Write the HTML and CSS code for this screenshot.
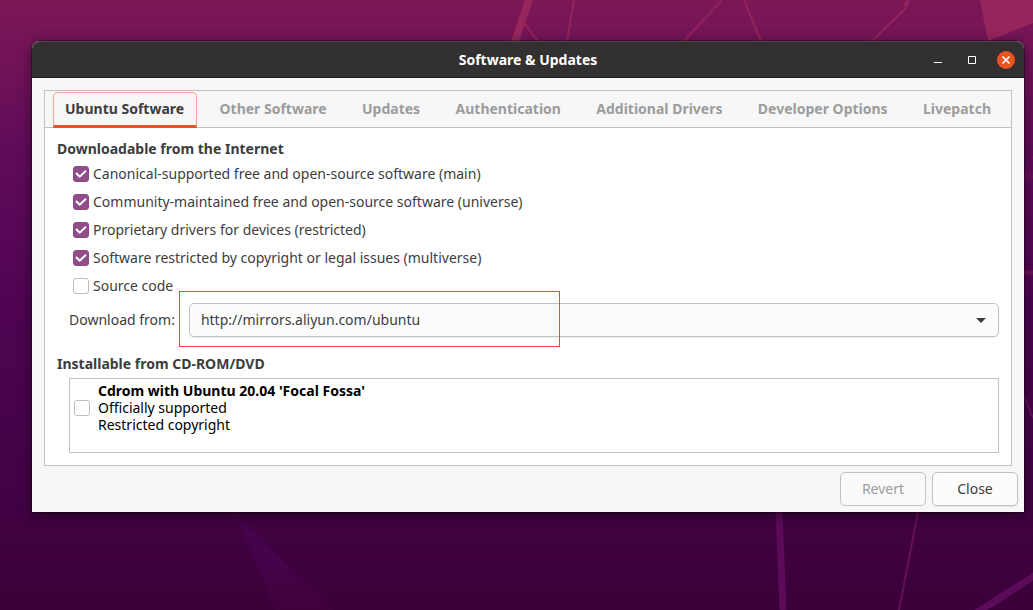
FILE: index.html
```html
<!DOCTYPE html>
<html lang="en">
<head>
<meta charset="utf-8">
<title>Software &amp; Updates</title>
<link rel="stylesheet" href="styles.css">
</head>
<body>
<svg class="wallpaper" viewBox="0 0 1033 610" preserveAspectRatio="none" aria-hidden="true">
  <defs>
    <linearGradient id="ray" x1="0" y1="0" x2="0" y2="1">
      <stop offset="0" stop-color="#4b0456" stop-opacity=".3"/>
      <stop offset=".4" stop-color="#4b0456" stop-opacity=".6"/>
      <stop offset="1" stop-color="#470442" stop-opacity=".4"/>
    </linearGradient>
  </defs>
  <g fill="#97265c">
    <path d="M980 0h53v23l-45 18z"/>
    <path d="M525 0h8l-14 41h-8z"/>
  </g>
  <g fill="none" stroke="#93235c" stroke-width="2">
    <path d="M523 22l15 19M574 0l-7 41M722 0l-38 41M744 0l17 41M907 0l-1 8-34 33"/>
    <path d="M908 0l-3 7" stroke-width="4"/>
  </g>
  <g fill="none" stroke="#680f59" stroke-width="2">
    <path d="M1033 156l-8 18"/>
    <path d="M1024 177l9-1" stroke-width="6"/>
    <path d="M1024 272l9 1" stroke-width="5"/>
    <path d="M1024 396l9 22M918 512l-19 98"/>
    <path d="M779 512l4 98" stroke-width="7" stroke="#5c0a5a"/>
    <path d="M1037 574l-62 40" stroke-width="7" stroke="#5c0a5a"/>
  </g>
  <path d="M234 512l100 98h-58z" fill="url(#ray)"/>
</svg>
<main class="window">
  <header class="titlebar">
    <h1 class="title">Software &amp; Updates</h1>
    <div class="controls">
      <button class="control" type="button" aria-label="Minimize"><svg width="18" height="18" viewBox="0 0 18 18"><path d="M5 11.5h8" stroke="#fff"/></svg></button>
      <button class="control" type="button" aria-label="Maximize"><svg width="18" height="18" viewBox="0 0 18 18"><path d="M5.500 5.500h7v7h-7z" fill="none" stroke="#fff"/></svg></button>
      <button class="control close" type="button" aria-label="Close window"><svg width="18" height="18" viewBox="0 0 18 18"><path d="M5.500 5.500l7 7m0-7l-7 7" stroke="#fff" stroke-width="1.500"/></svg></button>
    </div>
  </header>
  <div class="content">
    <section class="notebook">
      <div class="tabs" role="tablist">
        <button class="tab active" type="button" role="tab" aria-selected="true">Ubuntu Software</button>
        <button class="tab" type="button" role="tab">Other Software</button>
        <button class="tab" type="button" role="tab">Updates</button>
        <button class="tab" type="button" role="tab">Authentication</button>
        <button class="tab" type="button" role="tab">Additional Drivers</button>
        <button class="tab" type="button" role="tab">Developer Options</button>
        <button class="tab" type="button" role="tab">Livepatch</button>
      </div>
      <div class="panel" role="tabpanel">
        <h2 class="heading">Downloadable from the Internet</h2>
        <div class="options">
          <label class="option"><input class="check" type="checkbox" checked>Canonical-supported free and open-source software (main)</label>
          <label class="option"><input class="check" type="checkbox" checked>Community-maintained free and open-source software (universe)</label>
          <label class="option"><input class="check" type="checkbox" checked>Proprietary drivers for devices (restricted)</label>
          <label class="option"><input class="check" type="checkbox" checked>Software restricted by copyright or legal issues (multiverse)</label>
          <label class="option"><input class="check" type="checkbox">Source code</label>
        </div>
        <div class="download">
          <label class="download-label" for="server">Download from:</label>
          <div class="picker">
            <select class="select" id="server"><option>http://mirrors.aliyun.com/ubuntu</option></select>
            <svg class="arrow" width="10" height="5" viewBox="0 0 10 5"><path d="M0 0h10L5 5z" fill="#3d3d3d"/></svg>
            <div class="highlight"></div>
          </div>
        </div>
        <h2 class="heading">Installable from CD-ROM/DVD</h2>
        <div class="sources">
          <input class="check" type="checkbox" id="cdrom">
          <label class="source" for="cdrom"><b>Cdrom with Ubuntu 20.04 'Focal Fossa'</b><br>Officially supported<br>Restricted copyright</label>
        </div>
      </div>
    </section>
  </div>
  <footer class="actions">
    <button class="button" type="button" disabled>Revert</button>
    <button class="button" type="button">Close</button>
  </footer>
</main>
</body>
</html>
```
FILE: styles.css
```css
* { box-sizing: border-box; }
body {
  margin: 0;
  min-height: 100vh;
  padding: 41px 9px 98px 32px;
  background: linear-gradient(#7b1755, #741458 8%, #5f0b5a 26%, #4f0452 50%, #430346 78%, #3b0039);
  font: 14px/20px "Noto Sans", "Open Sans", sans-serif;
  color: #3d3d3d;
}
button, select, input { font: inherit; color: inherit; margin: 0; }
h1, h2 { margin: 0; font-size: 14px; font-weight: 700; }
.wallpaper { position: absolute; inset: 0; width: 100%; height: 100%; z-index: -1; }
.window {
  background: #f7f7f7;
  border-radius: 8px 8px 0 0;
  box-shadow: 0 0 0 1px rgba(0,0,0,.3), 0 3px 14px rgba(0,0,0,.5);
}
.titlebar {
  display: grid;
  grid-template-columns: 1fr auto 1fr;
  align-items: center;
  height: 37px;
  padding: 0 9px;
  background: #323030;
  border-top: 1px solid #4a4848;
  border-bottom: 1px solid #1f1d1d;
  border-radius: 8px 8px 0 0;
  color: #fff;
}
.title { grid-column: 2; }
.controls { display: flex; justify-content: flex-end; gap: 16px; }
.control { width: 18px; height: 18px; padding: 0; border: 0; background: none; border-radius: 50%; }
.control svg { display: block; }
.close { background: #e95420; }
.content { padding: 12px 12px 0; }
.notebook { border: 1px solid #c2c2c2; background: #fff; }
.tabs {
  display: flex;
  justify-content: space-between;
  height: 37px;
  padding: 1px 7px 0 8px;
  background: #f7f7f7;
  border-bottom: 1px solid #c2c2c2;
}
.tab {
  height: 36px;
  padding: 0 12px 0 11px;
  border: 1px solid transparent;
  border-bottom: 3px solid transparent;
  background: none;
  color: #9c9c9c;
  font-weight: 700;
  white-space: nowrap;
}
.active { color: #3d3d3d; border-color: #f2a78d #f2a78d #e95420; border-radius: 5px 5px 0 0; }
.panel { padding: 11px 12px 12px; }
.options { display: grid; gap: 8px; padding: 5px 0 0 16px; justify-items: start; }
.option { display: flex; align-items: center; gap: 4px; }
.check {
  flex: none;
  appearance: none;
  width: 16px;
  height: 16px;
  border: 1px solid #bdbdbd;
  border-radius: 3px;
  background: #fff;
}
.check:checked {
  border-color: #8a4b85;
  background: #924d8b url("data:image/svg+xml,%3Csvg xmlns='http://www.w3.org/2000/svg' viewBox='0 0 14 14'%3E%3Cpath d='M2 6l3.700 3.700L12 3.800' fill='none' stroke='white' stroke-width='2'/%3E%3C/svg%3E") center / 14px;
}
.download { display: flex; align-items: center; gap: 14px; padding: 7px 0 17px 12px; }
.picker { position: relative; flex: 1; display: flex; }
.select {
  appearance: none;
  width: 100%;
  height: 34px;
  padding: 0 32px 0 11px;
  border: 1px solid #c2c2c2;
  border-radius: 5px;
  background: #fcfcfc;
  box-shadow: 0 1px 1px rgba(0,0,0,.08);
}
.arrow { position: absolute; right: 13px; top: 15px; }
.highlight { position: absolute; left: -10px; top: -12px; width: 381px; height: 56px; border: 1px solid #f93e3e; pointer-events: none; }
.sources {
  display: flex;
  gap: 8px;
  align-items: center;
  margin: 4px 0 0 12px;
  padding: 3px 4px 19px;
  border: 1px solid #c2c2c2;
}
.source { color: #000; line-height: 17px; }
.actions { display: flex; justify-content: flex-end; gap: 6px; padding: 6px; }
.button {
  width: 86px;
  height: 34px;
  border: 1px solid #c2c2c2;
  border-radius: 5px;
  background: #fcfcfc;
  box-shadow: 0 1px 1px rgba(0,0,0,.08);
}
.button:disabled { color: #9c9c9c; background: #fafafa; box-shadow: none; }
```
